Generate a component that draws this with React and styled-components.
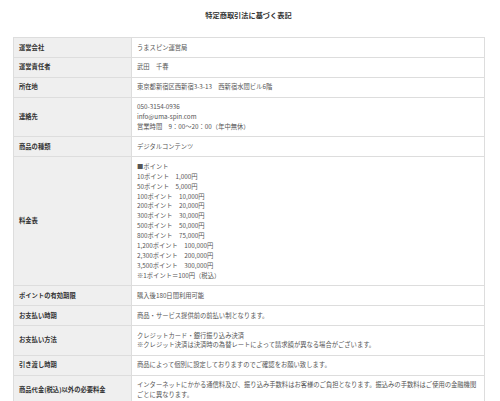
import React from "react";
import styled, { createGlobalStyle } from "styled-components";

const Global = createGlobalStyle`
  html, body { margin: 0; padding: 0; background: #fff; }
  body {
    font-family: "Noto Sans CJK JP", "Noto Sans", sans-serif;
    color: #555;
  }
`;

const Page = styled.div`
  padding: 10px 16px 0 13px;
`;

const Title = styled.h1`
  margin: 0 0 16px;
  font-size: 7.2px;
  line-height: 11px;
  font-weight: 700;
  color: #333;
  text-align: center;
`;

const Table = styled.table`
  width: 472px;
  border-collapse: collapse;
  table-layout: fixed;
  font-size: 6.3px;
  line-height: 9.9px;
`;

const LabelCol = styled.col`
  width: 118px;
`;

const Label = styled.th`
  background: #efefef;
  border: 1px solid #ddd;
  padding: 4.5px 5px;
  text-align: left;
  font-weight: 700;
  color: #333;
  vertical-align: middle;
`;

const Value = styled.td`
  border: 1px solid #ddd;
  padding: 4.5px 5px;
  color: #555;
  vertical-align: middle;
`;

const Line = styled.div``;

const rows = [
  ["運営会社", ["うまスピン運営局"]],
  ["運営責任者", ["武田　千春"]],
  ["所在地", ["東京都新宿区西新宿3-3-13　西新宿水間ビル6階"]],
  ["連絡先", ["050-3154-0936", "info@uma-spin.com", "営業時間　9：00～20：00（年中無休）"]],
  ["商品の種類", ["デジタルコンテンツ"]],
  [
    "料金表",
    [
      "■ポイント",
      "10ポイント　1,000円",
      "50ポイント　5,000円",
      "100ポイント　10,000円",
      "200ポイント　20,000円",
      "300ポイント　30,000円",
      "500ポイント　50,000円",
      "800ポイント　75,000円",
      "1,200ポイント　100,000円",
      "2,300ポイント　200,000円",
      "3,500ポイント　300,000円",
      "※1ポイント＝100円（税込）",
    ],
  ],
  ["ポイントの有効期限", ["購入後180日間利用可能"]],
  ["お支払い時期", ["商品・サービス提供前の前払い制となります。"]],
  [
    "お支払い方法",
    ["クレジットカード・銀行振り込み決済", "※クレジット決済は決済時の為替レートによって請求額が異なる場合がございます。"],
  ],
  ["引き渡し時期", ["商品によって個別に設定しておりますのでご確認をお願い致します。"]],
  [
    "商品代金(税込)以外の必要料金",
    ["インターネットにかかる通信料及び、振り込み手数料はお客様のご負担となります。振込みの手数料はご使用の金融機関ごとに異なります。"],
  ],
];

export default function App() {
  return (
    <>
      <Global />
      <Page>
        <Title>特定商取引法に基づく表記</Title>
        <Table>
          <colgroup>
            <LabelCol />
            <col />
          </colgroup>
          <tbody>
            {rows.map(([label, lines]) => (
              <tr key={label}>
                <Label>{label}</Label>
                <Value>
                  {lines.map((l, i) => (
                    <Line key={i}>{l}</Line>
                  ))}
                </Value>
              </tr>
            ))}
          </tbody>
        </Table>
      </Page>
    </>
  );
}
